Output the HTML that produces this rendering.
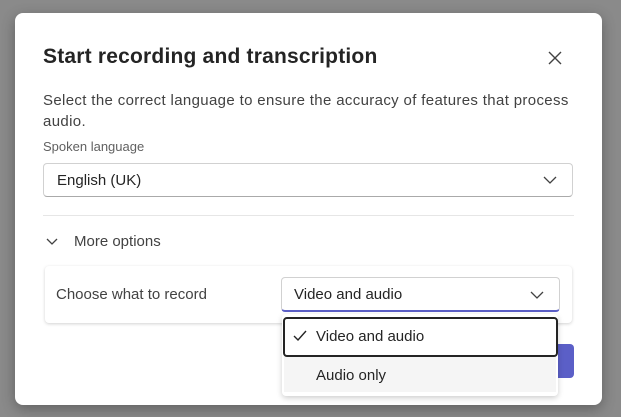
<!DOCTYPE html>
<html><head><style>
body{margin:0;width:621px;height:417px;background:#8a8a8a;font-family:"Liberation Sans",sans-serif;position:relative;overflow:hidden;color:#242424}
.dlg{position:absolute;left:15px;top:13px;width:587px;height:392px;background:#fff;border-radius:8px;box-shadow:0 4px 14px rgba(0,0,0,.3)}
.a{position:absolute}
</style></head><body>
<div class="dlg"></div>
<div class="a" style="left:43px;top:45px;font-size:21px;font-weight:bold;letter-spacing:0.2px">Start recording and transcription</div>
<svg class="a" style="left:548px;top:51px" width="14" height="14"><path d="M1 1L13 13M13 1L1 13" stroke="#424242" stroke-width="1.4"/></svg>
<div class="a" style="left:43px;top:90px;width:560px;font-size:15px;line-height:21px;color:#424242;letter-spacing:0.35px">Select the correct language to ensure the accuracy of features that process<br>audio.</div>
<div class="a" style="left:43px;top:139px;font-size:13px;color:#616161">Spoken language</div>
<div class="a" style="left:43px;top:163px;width:528px;height:32px;border:1px solid #d1d1d1;border-bottom-color:#aaa;border-radius:4px"></div>
<div class="a" style="left:57px;top:172px;font-size:15px">English (UK)</div>
<svg class="a" style="left:543px;top:176px" width="14" height="8"><path d="M1 1L7 7L13 1" stroke="#424242" fill="none" stroke-width="1.3"/></svg>
<div class="a" style="left:43px;top:215px;width:531px;height:1px;background:#e6e6e6"></div>
<svg class="a" style="left:46px;top:238px" width="12" height="8"><path d="M1 1L6 6L11 1" stroke="#424242" fill="none" stroke-width="1.3"/></svg>
<div class="a" style="left:74px;top:233px;font-size:15px;color:#424242">More options</div>
<div class="a" style="left:45px;top:266px;width:527px;height:57px;background:#fff;border-radius:4px;box-shadow:0 1px 3px rgba(0,0,0,.18)"></div>
<div class="a" style="left:56px;top:286px;font-size:15px;color:#424242">Choose what to record</div>
<div class="a" style="left:281px;top:277px;width:277px;height:32px;border:1px solid #d1d1d1;border-bottom:2px solid #5b5fc7;border-radius:4px"></div>
<div class="a" style="left:294px;top:286px;font-size:15px">Video and audio</div>
<svg class="a" style="left:530px;top:291px" width="14" height="8"><path d="M1 1L7 7L13 1" stroke="#424242" fill="none" stroke-width="1.3"/></svg>
<div class="a" style="left:555px;top:344px;width:19px;height:34px;background:#5b5fc7;border-radius:0 4px 4px 0"></div>
<div class="a" style="left:282px;top:314px;width:276px;height:82px;background:#fff;border-radius:4px;box-shadow:0 2px 6px rgba(0,0,0,.2)"></div>
<div class="a" style="left:284px;top:356px;width:272px;height:36px;background:#f5f5f5"></div>
<div class="a" style="left:283px;top:317px;width:271px;height:36px;border:2px solid #242424;border-radius:4px"></div>
<svg class="a" style="left:293px;top:330px" width="14" height="11"><path d="M1 6L5 10L13 1" stroke="#242424" fill="none" stroke-width="1.4"/></svg>
<div class="a" style="left:316px;top:328px;font-size:15px">Video and audio</div>
<div class="a" style="left:316px;top:367px;font-size:15px">Audio only</div>
</body></html>
